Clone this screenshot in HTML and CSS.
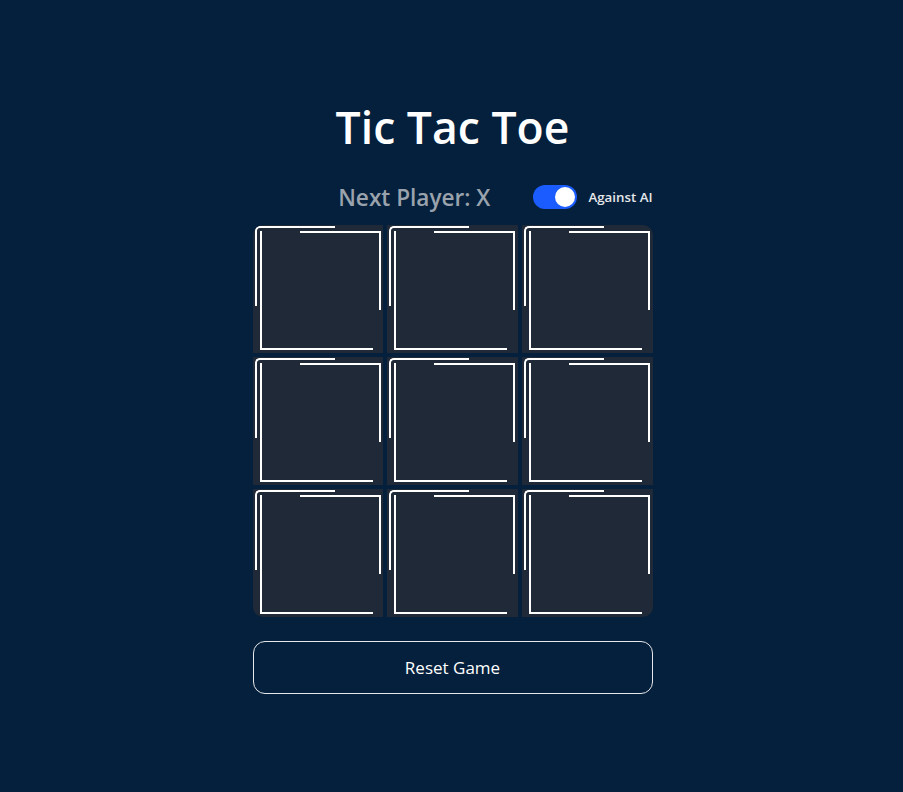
FILE: index.html
```html
<!DOCTYPE html>
<html lang="en">
<head>
<meta charset="utf-8">
<title>Tic Tac Toe</title>
<link rel="stylesheet" href="styles.css">
</head>
<body>
<main class="game">
  <h1 class="title">Tic Tac Toe</h1>
  <div class="status-row">
    <div class="status">Next Player: X</div>
    <label class="ai-toggle">
      <span class="switch on"><span class="knob"></span></span>
      <span class="ai-label">Against AI</span>
    </label>
  </div>
  <div class="board">
    <button class="cell"><span class="deco"></span></button>
    <button class="cell"><span class="deco"></span></button>
    <button class="cell"><span class="deco"></span></button>
    <button class="cell"><span class="deco"></span></button>
    <button class="cell"><span class="deco"></span></button>
    <button class="cell"><span class="deco"></span></button>
    <button class="cell"><span class="deco"></span></button>
    <button class="cell"><span class="deco"></span></button>
    <button class="cell"><span class="deco"></span></button>
  </div>
  <button class="reset">Reset Game</button>
</main>
</body>
</html>
```
FILE: styles.css
```css
html, body {
  margin: 0;
  padding: 0;
  background: #05203c;
  height: 100%;
}
body {
  font-family: "Open Sans", "Noto Sans", sans-serif;
  color: #ffffff;
  padding-left: 2px;
  box-sizing: border-box;
}
.game {
  width: 400px;
  margin: 0 auto;
  padding-top: 98px;
  display: flex;
  flex-direction: column;
}
.title {
  margin: 0;
  font-size: 44.5px;
  line-height: 58px;
  font-weight: 600;
  text-align: center;
  color: #ffffff;
}
.status-row {
  margin-top: 25px;
  height: 32px;
  display: flex;
  align-items: center;
  justify-content: flex-end;
  gap: 43px;
}
.status {
  font-size: 22.6px;
  font-weight: 600;
  color: #9aa3ad;
}
.ai-toggle {
  display: flex;
  align-items: center;
  gap: 11px;
}
.switch {
  width: 44px;
  height: 24px;
  border-radius: 12px;
  background: #1a5cff;
  display: flex;
  align-items: center;
  justify-content: flex-end;
  padding: 0 2px;
  box-sizing: border-box;
}
.knob {
  width: 20px;
  height: 20px;
  border-radius: 50%;
  background: #ffffff;
}
.ai-label {
  font-size: 13.3px;
  font-weight: 600;
  color: #e5e7eb;
}
.board {
  margin-top: 12px;
  display: grid;
  grid-template-columns: repeat(3, 1fr);
  grid-auto-rows: 128px;
  gap: 4px;
  border-radius: 10px;
  overflow: hidden;
}
.cell {
  position: relative;
  border: none;
  padding: 0;
  margin: 0;
  background: #1f2937;
  cursor: pointer;
}
.cell::before {
  content: "";
  position: absolute;
  left: 2px;
  top: 1px;
  width: 78px;
  height: 78px;
  border-top: 2px solid #ffffff;
  border-left: 2px solid #ffffff;
  border-top-left-radius: 5px;
}
.cell::after {
  content: "";
  position: absolute;
  left: 47px;
  top: 6px;
  width: 79px;
  height: 77px;
  border-top: 2px solid #ffffff;
  border-right: 2px solid #ffffff;
}
.deco {
  position: absolute;
  left: 7px;
  top: 6px;
  width: 111px;
  height: 117px;
  border-left: 2px solid #ffffff;
  border-bottom: 2px solid #ffffff;
}
.reset {
  margin-top: 24px;
  height: 53px;
  border: 1px solid #e5e7eb;
  border-radius: 12px;
  background: transparent;
  color: #ffffff;
  font-family: "Open Sans", "Noto Sans", sans-serif;
  font-size: 17px;
  cursor: pointer;
}
```
